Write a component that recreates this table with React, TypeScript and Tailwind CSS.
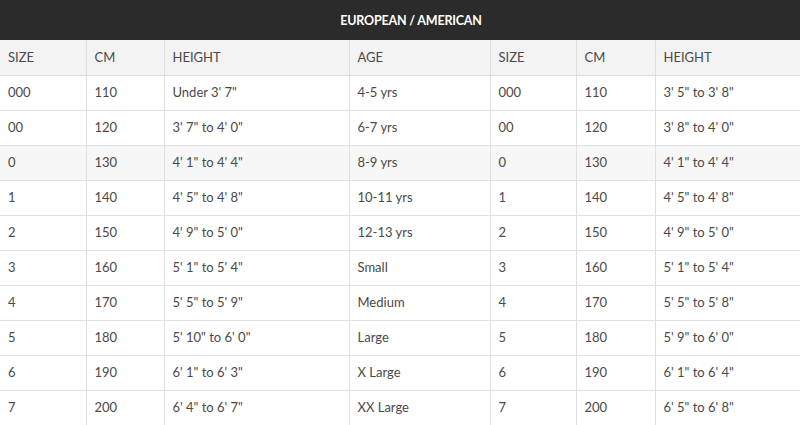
const ROWS = [
  ["000", "110", "Under 3' 7\"", "4-5 yrs", "000", "110", "3' 5\" to 3' 8\""],
  ["00", "120", "3' 7\" to 4' 0\"", "6-7 yrs", "00", "120", "3' 8\" to 4' 0\""],
  ["0", "130", "4' 1\" to 4' 4\"", "8-9 yrs", "0", "130", "4' 1\" to 4' 4\""],
  ["1", "140", "4' 5\" to 4' 8\"", "10-11 yrs", "1", "140", "4' 5\" to 4' 8\""],
  ["2", "150", "4' 9\" to 5' 0\"", "12-13 yrs", "2", "150", "4' 9\" to 5' 0\""],
  ["3", "160", "5' 1\" to 5' 4\"", "Small", "3", "160", "5' 1\" to 5' 4\""],
  ["4", "170", "5' 5\" to 5' 9\"", "Medium", "4", "170", "5' 5\" to 5' 8\""],
  ["5", "180", "5' 10\" to 6' 0\"", "Large", "5", "180", "5' 9\" to 6' 0\""],
  ["6", "190", "6' 1\" to 6' 3\"", "X Large", "6", "190", "6' 1\" to 6' 4\""],
  ["7", "200", "6' 4\" to 6' 7\"", "XX Large", "7", "200", "6' 5\" to 6' 8\""],
];

const HEAD = ["SIZE", "CM", "HEIGHT", "AGE", "SIZE", "CM", "HEIGHT"];
const WIDTHS = [86, 78, 185, 141, 86, 79, 145];

export default function App() {
  return (
    <div className="w-[800px] h-[425px] overflow-hidden bg-white font-['Lato','Liberation_Sans',sans-serif] text-[13px] text-[#4a4a4a]">
      <div className="h-[40px] bg-[#2b2b2b] flex items-center justify-center pt-[3px] pl-[22px] text-white font-bold text-[12.5px] tracking-[-0.2px]">
        EUROPEAN / AMERICAN
      </div>
      <table className="w-full table-fixed border-collapse">
        <colgroup>
          {WIDTHS.map((w, i) => (
            <col key={i} style={{ width: w }} />
          ))}
        </colgroup>
        <thead>
          <tr className="h-[35px] bg-[#f3f3f3]">
            {HEAD.map((h, i) => (
              <th
                key={i}
                className="border-b border-r border-[#dedede] last:border-r-0 text-left font-normal pl-[8px] p-0"
              >
                {h}
              </th>
            ))}
          </tr>
        </thead>
        <tbody>
          {ROWS.map((r, ri) => (
            <tr key={ri} className={`h-[35px] ${ri === 2 ? "bg-[#f7f7f7]" : "bg-white"}`}>
              {r.map((c, ci) => (
                <td
                  key={ci}
                  className="border-b border-r border-[#e0e0e0] last:border-r-0 pl-[8px] p-0 whitespace-nowrap"
                >
                  {c}
                </td>
              ))}
            </tr>
          ))}
        </tbody>
      </table>
    </div>
  );
}
